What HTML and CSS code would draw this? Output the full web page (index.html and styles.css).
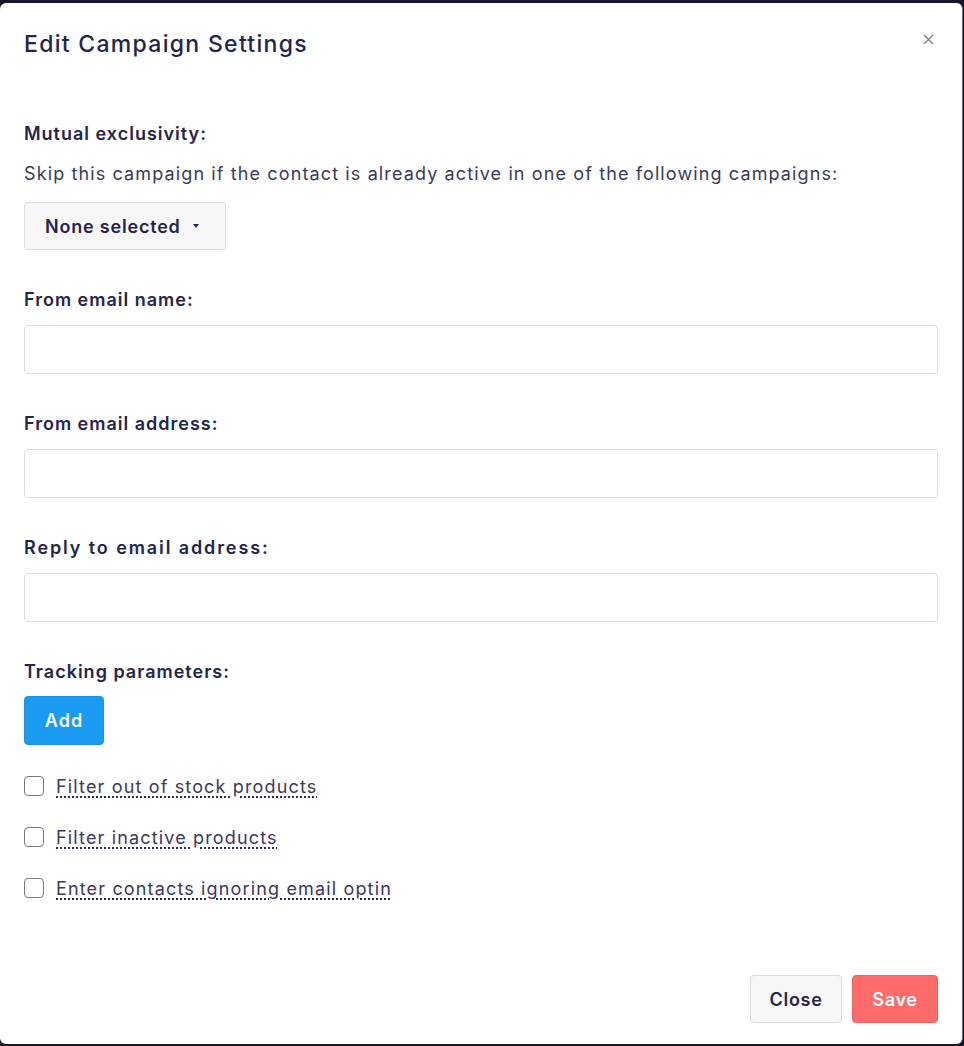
FILE: index.html
```html
<!DOCTYPE html>
<html lang="en">
<head>
<meta charset="utf-8">
<title>Edit Campaign Settings</title>
<link rel="stylesheet" href="styles.css">
</head>
<body>
<div class="modal">
  <div class="modal-header">
    <h1 class="modal-title">Edit Campaign Settings</h1>
    <button class="close-x" aria-label="Close">
      <svg width="11" height="11" viewBox="0 0 11 11"><path d="M1 1 L10 10 M10 1 L1 10" stroke="#8a8a8a" stroke-width="1.6" fill="none"/></svg>
    </button>
  </div>
  <div class="modal-body">
    <div class="group first">
      <div class="label">Mutual exclusivity:</div>
      <div class="help">Skip this campaign if the contact is already active in one of the following campaigns:</div>
      <button class="dropdown">None selected <span class="caret"></span></button>
    </div>
    <div class="group">
      <div class="label">From email name:</div>
      <input class="input" type="text">
    </div>
    <div class="group">
      <div class="label">From email address:</div>
      <input class="input" type="text">
    </div>
    <div class="group">
      <div class="label label-wide">Reply to email address:</div>
      <input class="input" type="text">
    </div>
    <div class="group">
      <div class="label">Tracking parameters:</div>
      <button class="btn-add">Add</button>
    </div>
    <div class="checks">
      <label class="check"><span class="box"></span><span class="check-text">Filter out of stock products</span></label>
      <label class="check"><span class="box"></span><span class="check-text">Filter inactive products</span></label>
      <label class="check"><span class="box"></span><span class="check-text">Enter contacts ignoring email optin</span></label>
    </div>
  </div>
  <div class="modal-footer">
    <button class="btn-close">Close</button>
    <button class="btn-save">Save</button>
  </div>
</div>
</body>
</html>
```
FILE: styles.css
```css
* { box-sizing: border-box; }
html, body { margin: 0; padding: 0; }
body {
  background: #15152a;
  font-family: "Inter", "Noto Sans", sans-serif;
  color: #2b2b4d;
  height: 1046px;
  overflow: hidden;
}
.modal {
  margin-top: 3px;
  width: 963px;
  height: 1041px;
  background: #ffffff;
  border-radius: 6px;
  border-right: 1px solid #6a6a72;
  display: flex;
  flex-direction: column;
}
.modal-header {
  display: flex;
  justify-content: space-between;
  align-items: flex-start;
  padding: 26px 28px 0 24px;
}
.modal-title {
  margin: 0;
  font-size: 23px;
  line-height: 30px;
  font-weight: 500;
  letter-spacing: 1.3px;
  color: #24244a;
}
.close-x {
  border: 0;
  background: none;
  padding: 0;
  margin-top: 5px;
  margin-right: 0;
  cursor: pointer;
  line-height: 0;
}
.modal-body {
  padding: 0 24px;
  flex: 1;
}
.group { margin-top: 38px; }
.group.first { margin-top: 63px; }
.label {
  font-size: 18px;
  line-height: 24px;
  font-weight: 600;
  letter-spacing: 1px;
  color: #25254b;
}
.label-wide { letter-spacing: 1.9px; }
.help {
  margin-top: 16px;
  font-size: 18px;
  line-height: 24px;
  letter-spacing: 1.12px;
  color: #3a3a5c;
}
.dropdown {
  margin-top: 16px;
  height: 48px;
  width: 202px;
  background: #f7f7f8;
  border: 1px solid #dcdcdf;
  border-radius: 4px;
  font-family: inherit;
  font-size: 18px;
  font-weight: 600;
  letter-spacing: 0.8px;
  color: #25254b;
  display: flex;
  align-items: center;
  justify-content: flex-start;
  gap: 12px;
  padding: 0 0 0 20px;
}
.caret {
  width: 0;
  height: 0;
  border-left: 3.5px solid transparent;
  border-right: 3.5px solid transparent;
  border-top: 4px solid #25254b;
}
.input {
  display: block;
  margin-top: 13px;
  width: 914px;
  height: 49px;
  border: 1px solid #dcdcdf;
  border-radius: 4px;
  background: #fff;
  font-family: inherit;
}
.btn-add {
  margin-top: 12px;
  width: 80px;
  height: 49px;
  border: 1px solid #1694ea;
  border-radius: 4px;
  background: #1a9bf1;
  color: #ffffff;
  font-family: inherit;
  font-size: 18px;
  font-weight: 600;
  letter-spacing: 1px;
}
.checks {
  margin-top: 29px;
  display: flex;
  flex-direction: column;
  gap: 27px;
}
.check {
  display: flex;
  align-items: center;
  gap: 12px;
  height: 24px;
  font-size: 18px;
  letter-spacing: 1.15px;
  color: #3a3a5c;
}
.box {
  width: 20px;
  height: 20px;
  border: 1.5px solid #77777d;
  border-radius: 4px;
  background: #fff;
  flex: none;
}
.check-text {
  text-decoration: underline dotted #2b2b58;
  text-decoration-thickness: 2px;
  text-underline-offset: 4px;
}
.modal-footer {
  display: flex;
  justify-content: flex-end;
  gap: 10px;
  padding: 0 24px 21px 24px;
}
.btn-close, .btn-save {
  height: 48px;
  border-radius: 4px;
  font-family: inherit;
  font-size: 18px;
  font-weight: 600;
  letter-spacing: 0.7px;
}
.btn-close {
  width: 92px;
  background: #f7f7f8;
  border: 1px solid #dcdcdf;
  color: #25254b;
}
.btn-save {
  width: 86px;
  background: #ff6b6b;
  border: 1px solid #f26262;
  color: #ffffff;
}
```
